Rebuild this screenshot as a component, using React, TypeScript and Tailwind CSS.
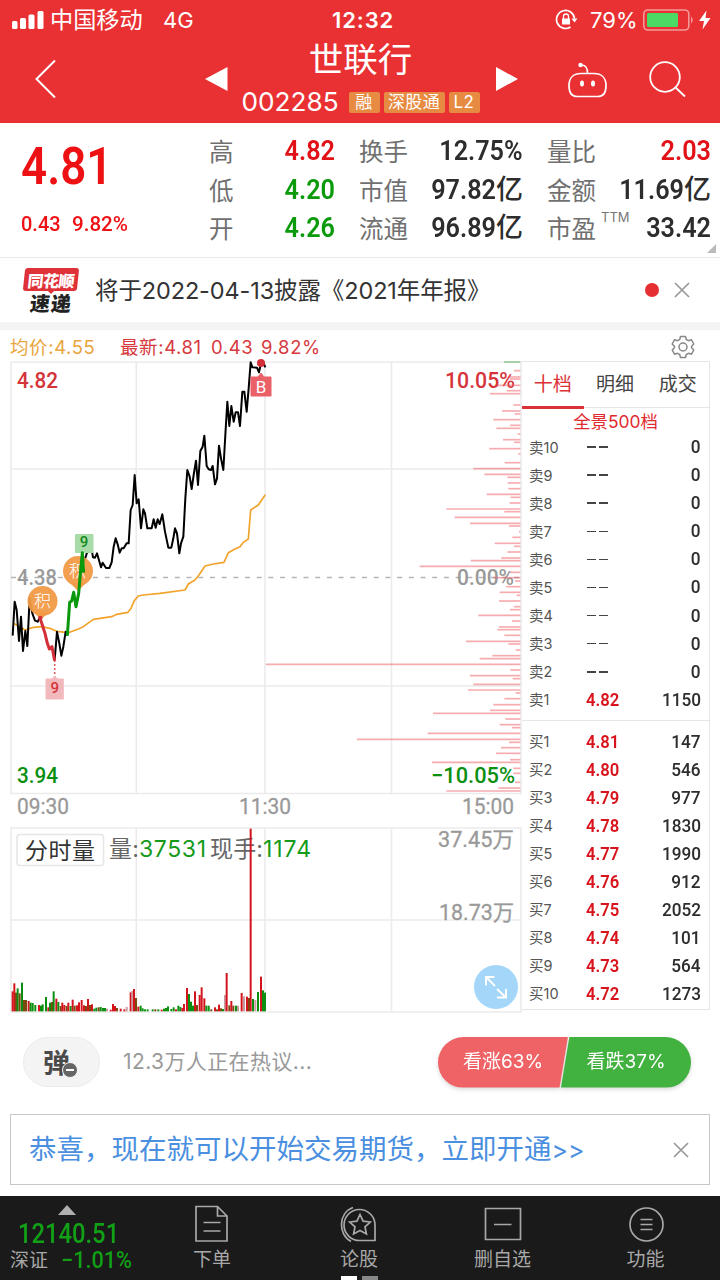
import React from "react";

const din = "inline-block whitespace-nowrap font-['Roboto','Noto_Sans_CJK_SC',sans-serif]";

type Metric = { label: string; sup?: string; value: string; unit?: string; color: string };

const metricColumns: { width: string; items: Metric[] }[] = [
  {
    width: "w-[126px]",
    items: [
      { label: "高", value: "4.82", color: "text-[#e01218]" },
      { label: "低", value: "4.20", color: "text-[#0a9a0c]" },
      { label: "开", value: "4.26", color: "text-[#0a9a0c]" },
    ],
  },
  {
    width: "w-[164px]",
    items: [
      { label: "换手", value: "12.75%", color: "text-[#2d2d2d]" },
      { label: "市值", value: "97.82", unit: "亿", color: "text-[#2d2d2d]" },
      { label: "流通", value: "96.89", unit: "亿", color: "text-[#2d2d2d]" },
    ],
  },
  {
    width: "w-[164px]",
    items: [
      { label: "量比", value: "2.03", color: "text-[#e01218]" },
      { label: "金额", value: "11.69", unit: "亿", color: "text-[#2d2d2d]" },
      { label: "市盈", sup: "TTM", value: "33.42", color: "text-[#2d2d2d]" },
    ],
  },
];

const asks = [
  ["卖10", "--", "0"],
  ["卖9", "--", "0"],
  ["卖8", "--", "0"],
  ["卖7", "--", "0"],
  ["卖6", "--", "0"],
  ["卖5", "--", "0"],
  ["卖4", "--", "0"],
  ["卖3", "--", "0"],
  ["卖2", "--", "0"],
  ["卖1", "4.82", "1150"],
];

const bids = [
  ["买1", "4.81", "147"],
  ["买2", "4.80", "546"],
  ["买3", "4.79", "977"],
  ["买4", "4.78", "1830"],
  ["买5", "4.77", "1990"],
  ["买6", "4.76", "912"],
  ["买7", "4.75", "2052"],
  ["买8", "4.74", "101"],
  ["买9", "4.73", "564"],
  ["买10", "4.72", "1273"],
];

// Turnover per price level: [left edge, y] in third-pixel units, measured from x=260.
const upperLevels = [
  [762, 137], [745, 156], [750, 162], [712, 181], [740, 197], [690, 206], [760, 240], [726, 258], [764, 267],
  [700, 284], [750, 301], [709, 310], [773, 327], [729, 344], [762, 352], [688, 371], [775, 387], [734, 413],
  [640, 431], [673, 448], [742, 457], [743, 474], [745, 491], [680, 508], [752, 517], [749, 534], [559, 552],
  [733, 560], [584, 577], [630, 595], [747, 603], [777, 620], [757, 637], [704, 655], [762, 664], [742, 681],
  [724, 699], [632, 707], [479, 724],
];
const lowerLevels = [
  [750, 7], [700, 23], [765, 33], [738, 50], [719, 67], [770, 76], [717, 93], [762, 110], [750, 119],
  [655, 136], [756, 153], [717, 171], [712, 179], [733, 196], [618, 214], [745, 222], [767, 240], [697, 257],
  [659, 266], [18, 283], [751, 300], [630, 317], [758, 326], [640, 343], [624, 360], [767, 369], [733, 386],
  [700, 404], [690, 421], [519, 430], [736, 447], [719, 464], [756, 473], [503, 490], [291, 508], [747, 517],
  [723, 533], [708, 550], [750, 569], [516, 577], [760, 595], [760, 610], [765, 637], [715, 654], [559, 663],
];

// Volume bars: [x, top, colour key] in third-pixel units; baseline is 574.
const volumes: [number, number, string][] = [
  [38, 514, "r"], [43, 490, "r"], [48, 518, "b"], [53, 505, "g"], [59, 520, "b"], [66, 488, "g"], [72, 540, "b"],
  [78, 540, "b"], [86, 543, "r"], [92, 548, "g"], [98, 549, "g"], [106, 555, "g"], [117, 555, "r"], [123, 557, "g"],
  [128, 553, "g"], [138, 531, "g"], [145, 562, "r"], [150, 548, "g"], [156, 546, "b"], [161, 514, "g"], [169, 536, "r"],
  [175, 546, "g"], [182, 558, "b"], [187, 548, "r"], [193, 555, "r"], [200, 558, "b"], [205, 548, "r"], [212, 558, "g"],
  [218, 539, "r"], [224, 557, "b"], [231, 556, "r"], [237, 547, "r"], [245, 540, "r"], [252, 556, "r"], [258, 558, "b"],
  [264, 537, "r"], [270, 555, "b"], [276, 553, "r"], [283, 566, "g"], [289, 563, "g"], [296, 562, "b"], [302, 561, "g"],
  [309, 564, "g"], [315, 564, "g"], [321, 566, "p"], [332, 569, "r"], [339, 552, "r"], [345, 558, "r"], [351, 564, "b"],
  [362, 566, "r"], [373, 568, "r"], [380, 561, "p"], [392, 517, "r"], [397, 513, "p"], [402, 507, "r"], [408, 534, "b"],
  [415, 560, "r"], [422, 557, "g"], [428, 565, "g"], [435, 568, "g"], [443, 568, "g"], [458, 568, "g"], [466, 568, "b"],
  [475, 568, "g"], [485, 569, "r"], [492, 566, "g"], [498, 564, "g"], [504, 559, "g"], [514, 567, "g"], [521, 562, "g"],
  [528, 568, "r"], [535, 557, "g"], [541, 561, "g"], [547, 564, "r"], [552, 552, "r"], [561, 504, "r"], [567, 522, "g"],
  [573, 545, "g"], [579, 557, "g"], [585, 514, "r"], [591, 555, "b"], [599, 525, "r"], [605, 502, "r"], [613, 535, "r"],
  [619, 557, "g"], [626, 557, "g"], [634, 568, "b"], [645, 562, "r"], [651, 568, "b"], [657, 554, "r"], [663, 565, "b"],
  [669, 567, "g"], [675, 525, "p"], [680, 459, "r"], [688, 556, "b"], [694, 543, "r"], [700, 557, "b"], [708, 557, "g"],
  [714, 557, "p"], [725, 519, "r"], [732, 529, "p"], [741, 530, "r"], [747, 534, "b"], [752, 26, "r"], [759, 537, "g"],
  [766, 540, "p"], [774, 516, "g"], [783, 470, "r"], [789, 511, "g"], [795, 518, "g"],
];
const volumeColor: Record<string, string> = { r: "#d4141c", g: "#0c8f10", b: "#7b4a10", p: "#c99aa0" };

function StatusBar() {
  return (
    <div className="flex h-10 items-center font-['Inter','Noto_Sans_CJK_SC',sans-serif] text-white">
      <svg className="ml-[11px]" width="33" height="20" viewBox="0 0 33 20" fill="#fff">
        <rect x="1" y="11" width="5.5" height="8" rx="1.5" />
        <rect x="9" y="8" width="6" height="11" rx="1.5" />
        <rect x="17.5" y="4.500" width="6" height="14.500" rx="1.500" />
        <rect x="26.500" y="1" width="6" height="18" rx="1.500" />
      </svg>
      <span className="ml-[6px] w-[113px] whitespace-nowrap text-[23.2px] leading-10">中国移动</span>
      <span className="w-[169px] text-[22px] leading-10">4G</span>
      <span className="w-[223px] text-[22px] font-semibold leading-10 tracking-[0.9px]">12:32</span>
      <svg width="24" height="22" viewBox="0 0 24 22" fill="none" stroke="#fff" strokeWidth="1.700">
        <path d="M19.500 9.500A9 9 0 1 0 15.500 18" />
        <path d="M16.500 9.500h6l-3 4z" fill="#fff" stroke="none" />
        <rect x="7" y="9.500" width="8" height="6" fill="#fff" stroke="none" />
        <path d="M8.500 10V7.500a2.500 2.500 0 0 1 5 0V10" strokeWidth="1.300" />
      </svg>
      <span className="ml-[11px] w-[53px] text-[22px] leading-10">79%</span>
      <svg width="70" height="24" viewBox="643 8 70 24">
        <rect x="643.800" y="10" width="45" height="20" rx="4" fill="none" stroke="#f49a9b" strokeWidth="1.600" />
        <rect x="647" y="13" width="31" height="14" rx="1.500" fill="#4cd964" />
        <path d="M691 16.500q3.500 3.500 0 7z" fill="#f49a9b" />
        <path d="M706.500 10.500l-7.500 10.500h5l-1.500 8.500 8-11.500h-5z" fill="#fff" />
      </svg>
    </div>
  );
}

function TitleBar() {
  return (
    <div className="flex h-[78px] items-center font-['Inter','Noto_Sans_CJK_SC',sans-serif] text-white">
      <svg className="ml-[34px]" width="22" height="40" viewBox="0 0 22 40" fill="none" stroke="#fff" strokeWidth="2">
        <path d="M21 1.500L2.500 20 21 38.500" />
      </svg>
      <svg className="ml-[149px]" width="23" height="24" viewBox="0 0 23 24" fill="#fff">
        <path d="M0 12L22.500 0v24z" />
      </svg>
      <div className="flex h-[78px] w-[268px] flex-col items-center pr-[3px]">
        <h1 className="h-[38px] text-[34.5px] font-normal leading-[40px]">世联行</h1>
        <div className="mt-[12px] flex h-6 items-center">
          <span className="w-[98px] text-[26.2px] leading-6">002285</span>
          <div className="ml-[9px] mt-px flex gap-1 text-center text-[17px] leading-5 tracking-[0.4px]">
            <span className="h-[21px] w-[31px] rounded-[2px] bg-[#e88b42]">融</span>
            <span className="h-[21px] w-[61px] rounded-[2px] bg-[#e88b42]">深股通</span>
            <span className="h-[21px] w-[31px] rounded-[2px] bg-[#e88b42]">L2</span>
          </div>
        </div>
      </div>
      <svg width="22" height="24" viewBox="0 0 22 24" fill="#fff">
        <path d="M22 12L0 0v24z" />
      </svg>
      <svg className="ml-[48px]" width="42" height="40" viewBox="566 60 42 40" fill="none" stroke="#fff" strokeWidth="1.700">
        <path d="M569 86.500c0-8 5-12 12-12h13c7 0 12 4 12 12 0 7-3 11-8 11h-21c-5 0-8-4-8-11z" />
        <path d="M581 66c5 0 6.500 2.500 6.500 8.500" />
        <circle cx="580.500" cy="66" r="2.200" fill="#fff" stroke="none" />
        <ellipse cx="582" cy="84.500" rx="2" ry="3" fill="#fff" stroke="none" />
        <ellipse cx="593" cy="84.500" rx="2" ry="3" fill="#fff" stroke="none" />
      </svg>
      <svg className="ml-[41px]" width="38" height="38" viewBox="649 60 38 38" fill="none" stroke="#fff" strokeWidth="1.800">
        <circle cx="665" cy="77" r="14.800" />
        <path d="M675 87l10 9.500" />
      </svg>
    </div>
  );
}

function Summary() {
  return (
    <section className="flex h-[135px] border-b border-[#e9e9e9]">
      <div className="w-[209px] pl-[21px] font-medium text-[#ee1114]">
        <div className={`${din} h-[86px] origin-left scale-x-[0.88] text-[52px] font-semibold leading-[88px]`}>4.81</div>
        <div className="flex h-[31px] items-center gap-[9px]">
          <span className="w-[42px]">
            <span className={`${din} origin-left scale-x-[0.95] text-[21px] leading-[33px]`}>0.43</span>
          </span>
          <span className={`${din} origin-left scale-x-[0.98] text-[21px] leading-[33px]`}>9.82%</span>
        </div>
      </div>
      <div className="flex gap-6 pt-[9px]">
        {metricColumns.map((column, index) => (
          <div key={index} className={column.width}>
            {column.items.map((item) => (
              <div key={item.label} className="flex h-[38.5px] items-center justify-between">
                <span className="flex whitespace-nowrap font-['Noto_Sans_CJK_SC',sans-serif] text-[24.5px] leading-[38px] text-[#707070]">
                  {item.label}
                  {item.sup && (
                    <sup className="top-0 ml-[5px] w-0 font-['Inter',sans-serif] text-[13px] leading-[16px] text-[#777]">
                      {item.sup}
                    </sup>
                  )}
                </span>
                <span className={`flex justify-end font-semibold ${item.color}`}>
                  <span className={`${din} origin-right scale-x-[0.9] text-[28px] leading-[38px]`}>{item.value}</span>
                  {item.unit && <span className={`${din} text-[27px] font-medium leading-[38px]`}>{item.unit}</span>}
                </span>
              </div>
            ))}
          </div>
        ))}
      </div>
      <svg className="mb-1 ml-[-4px] self-end" width="9" height="9" viewBox="0 0 9 9">
        <path d="M9 0v9H0z" fill="#bbb" />
      </svg>
    </section>
  );
}

function CloseIcon() {
  return (
    <svg width="16" height="16" viewBox="0 0 16 16" stroke="#999" strokeWidth="1.700" fill="none">
      <path d="M1 1l14 14M15 1L1 15" />
    </svg>
  );
}

function News() {
  return (
    <section className="flex h-[64px] items-center font-['Inter','Noto_Sans_CJK_SC',sans-serif]">
      <div className="ml-[22px] flex w-[57px] flex-col items-center">
        <div className="flex h-[23px] w-[54px] -skew-x-6 items-center justify-center rounded-[3px] bg-[#df3238] font-['Noto_Sans_CJK_SC',sans-serif] text-[16px] font-black tracking-[-0.5px] text-white">
          同花顺
        </div>
        <svg width="6" height="3" viewBox="0 0 6 3">
          <path d="M0 0h6L3 3z" fill="#df3238" />
        </svg>
        <div className="-mt-px -skew-x-6 font-['Noto_Sans_CJK_SC',sans-serif] text-[20px] font-black leading-[20px] tracking-[1px] text-[#222]">
          速递
        </div>
      </div>
      <p className="ml-[16px] mt-px w-[550px] whitespace-nowrap text-[23.500px] leading-[30px] tracking-[-0.12px] text-[#333]">
        将于2022-04-13披露《2021年年报》
      </p>
      <span className="size-[14px] rounded-full bg-[#e62e33]" />
      <span className="ml-[15px]">
        <CloseIcon />
      </span>
    </section>
  );
}

function Legend() {
  return (
    <div className="flex h-[31px] items-center whitespace-nowrap pl-[10px] pt-[3px] font-['Inter','Noto_Sans_CJK_SC',sans-serif] text-[18.500px] leading-[30px] tracking-[0.6px] text-[#d63a40]">
      <span className="w-[110px] text-[#e9a53c]">均价:4.55</span>
      <span className="w-[91px]">最新:4.81</span>
      <span className="w-[50px]">0.43</span>
      <span className="w-[410px]">9.82%</span>
      <svg width="24" height="24" viewBox="0 0 24 24" fill="none" stroke="#888" strokeWidth="1.500" strokeLinejoin="round">
        <path d="M9.500 1.500h5l.8 3 2.200 1.200 3-.9 2.300 4.200-2.200 2.200v1.600l2.200 2.200-2.300 4.200-3-.9-2.200 1.200-.8 3h-5l-.8-3-2.200-1.200-3 .9-2.300-4.200 2.200-2.200v-1.600L1.200 9l2.300-4.200 3 .9 2.200-1.200z" />
        <circle cx="12" cy="12" r="4" />
      </svg>
    </div>
  );
}

function Charts() {
  return (
    <svg
      className="shrink-0 font-['Roboto','Noto_Sans_CJK_SC',sans-serif]"
      width="522"
      height="656"
      viewBox="0 358 522 656"
      fill="none"
    >
      {/* grid */}
      <g stroke="#ebebeb" strokeWidth="1.600">
        <path d="M11 362H521V793.500H11zM136.300 362V793.500M265 362V793.500M391.500 362V793.500M11 469H521M11 686H521" />
        <path d="M11 828H521V1012H11zM136.300 828V1012M265 828V1012M391.500 828V1012M11 920H521" />
      </g>
      <path d="M11 577.500H521" stroke="#b5b5b5" strokeWidth="1.300" strokeDasharray="5 6.700" />

      <text x="457" y="585" fontSize="22" fontWeight="500" fill="#999" textLength="57" lengthAdjust="spacingAndGlyphs">0.00%</text>
      <text x="445" y="387.500" fontSize="22" fontWeight="500" fill="#d5343a" textLength="70" lengthAdjust="spacingAndGlyphs">10.05%</text>

      <g stroke="#ee5a60" strokeOpacity="0.5" strokeWidth="5">
        <g transform="translate(260 325) scale(.33333)">
          {upperLevels.map(([x, y]) => (
            <path key={`u${y}`} d={`M${x} ${y}H781`} />
          ))}
          <path d="M732 111H781" stroke="#35a845" />
        </g>
        <g transform="translate(260 570) scale(.33333)">
          {lowerLevels.map(([x, y]) => (
            <path key={`l${y}`} d={`M${x} ${y}H781`} />
          ))}
        </g>
      </g>

      {/* average price */}
      <path
        transform="translate(0 530) scale(.33333)"
        d="M40 280L60 290 75 300 100 292 125 290 150 295 170 304 205 308 235 297 250 290 280 268 300 265 335 260 350 253 384 247 393 235 403 212 415 198 430 195 480 190 555 180 565 162 585 150 597 135 615 108 640 102 672 97 685 68 705 57 720 50 730 37 745 27 752 -60 775 -75 785 -90 796 -106"
        stroke="#f2a32c"
        strokeWidth="5"
        strokeLinejoin="round"
      />
      {/* last price */}
      <g strokeLinejoin="round" strokeWidth="6">
        <path
          transform="translate(0 530) scale(.33333)"
          d="M38 317L44 215 50 240 57 333 63 260 69 363 76 303 82 348 89 205 97 250 105 272 113 275 120 262M164 390L171 305 178 340 184 377 190 350 197 305 202 317"
          stroke="#000"
        />
        <path
          transform="translate(0 325) scale(.33333)"
          d="M247 700L253 708 262 680 272 655 279 697 285 698 291 685 303 727 308 713 318 729 328 729 335 712 341 665 347 640 353 658 359 683 365 670 371 670 380 655 386 655 392 555 398 540 404 450 410 535 416 523 423 610 430 553 435 565 442 610 455 610 461 583 467 608 473 583 479 597 487 568 495 620 505 668 514 668 520 640 525 610 531 625 538 685 543 655 550 635 556 520 562 435 569 455 575 492 581 450 588 407 594 480 601 378 608 365 613 332 620 423 626 433 633 435 638 423 645 478 651 460 657 362 663 400 670 435 676 330 682 230 688 303 694 243 701 290 707 262 714 262 720 303 727 200 733 200 740 260 746 190 752 112 757 127 771 128 777 142 783 115 790 112 796 127"
          stroke="#000"
        />
      </g>

      {/* marker pins */}
      <g fill="#f29a47" fillOpacity="0.95">
        <circle cx="78" cy="571" r="15" />
        <path d="M70 583l8 8 8-8z" />
        <circle cx="42.500" cy="601" r="15" />
        <path d="M34 612l6.500 8 9-8z" />
      </g>
      <g fill="#fff" fontSize="17" fontWeight="300" textAnchor="middle">
        <text x="77.500" y="577">积</text>
        <text x="42.500" y="607">积</text>
      </g>
      <path d="M54.700 660V677" stroke="#e0555a" strokeWidth="1.500" strokeDasharray="2 2" />
      <path d="M46 679h6l2.700-3 2.600 3h6v20H46z" fill="#f2b9bd" stroke="#f2b9bd" strokeLinejoin="round" />
      <text x="54.700" y="693" fontSize="15" fontWeight="500" fill="#d5343a" textAnchor="middle">9</text>
      <rect x="75" y="534" width="18.500" height="19" rx="1" fill="#a8dba8" />
      <text x="84" y="547" fontSize="15" fontWeight="500" fill="#138a1a" textAnchor="middle">9</text>

      <g transform="translate(0 530) scale(.33333)" strokeLinejoin="round" strokeWidth="9">
        <path d="M120 265L127 285 135 310 142 340 148 357 156 350 164 392" stroke="#d42f38" />
        <path d="M202 317L209 217 215 213 221 187 228 230 236 190 242 120 247 68 251 128" stroke="#0a980c" />
      </g>
      <circle cx="40.300" cy="618" r="2.200" fill="#d42f38" />
      <circle cx="261" cy="363" r="4" fill="#d42f38" />
      <path d="M251 377h7l3-4 3 4h7v19h-20z" fill="#ea6168" stroke="#ea6168" strokeLinejoin="round" />
      <text x="261" y="392.500" fontSize="17" fill="#fff" textAnchor="middle">B</text>

      <g fontSize="22" fontWeight="500">
        <text x="17" y="387.500" fill="#d5343a" textLength="41" lengthAdjust="spacingAndGlyphs">4.82</text>
        <text x="17" y="585" fill="#999" textLength="40" lengthAdjust="spacingAndGlyphs">4.38</text>
        <text x="17" y="783" fill="#0b8f10" textLength="41" lengthAdjust="spacingAndGlyphs">3.94</text>
        <text x="431" y="783" fill="#0b8f10" textLength="84" lengthAdjust="spacingAndGlyphs">−10.05%</text>
      </g>
      <g fontSize="22" fill="#999" stroke="#999" strokeWidth="0.3">
        <text x="17" y="813.500" textLength="52" lengthAdjust="spacingAndGlyphs">09:30</text>
        <text x="239" y="813.500" textLength="52" lengthAdjust="spacingAndGlyphs">11:30</text>
        <text x="462" y="813.500" textLength="52" lengthAdjust="spacingAndGlyphs">15:00</text>
        <text x="438" y="846.500" textLength="76" lengthAdjust="spacingAndGlyphs">37.45万</text>
        <text x="439" y="920" textLength="75" lengthAdjust="spacingAndGlyphs">18.73万</text>
      </g>

      {/* volume */}
      <rect x="17" y="834.500" width="86.500" height="31" rx="3" fill="#fff" stroke="#e6e6e6" strokeWidth="1.600" />
      <g fontSize="23" fontFamily="Inter, Noto Sans CJK SC, sans-serif">
        <text x="25" y="859" fill="#333" textLength="70">分时量</text>
        <text x="109" y="857" fill="#666" textLength="30">量:</text>
        <text x="139" y="857" fill="#159a1a" textLength="67">37531</text>
        <text x="210" y="857" fill="#666" textLength="53">现手:</text>
        <text x="263" y="857" fill="#159a1a" textLength="48">1174</text>
      </g>
      <g transform="translate(0 820) scale(.33333)" strokeWidth="6">
        {volumes.map(([x, top, key]) => (
          <path key={x} d={`M${x} 574V${top}`} stroke={volumeColor[key]} />
        ))}
      </g>

      <circle cx="496" cy="987" r="22" fill="#a3d6f8" />
      <path d="M495 986l-9-9m0 8.500v-8.500h8.500M497 989l9 8.500m0-8.500v8.500h-9" stroke="#fff" strokeWidth="1.900" />
    </svg>
  );
}

function DepthRow({ row }: { row: string[] }) {
  const empty = row[1] === "--";
  return (
    <div className="flex h-[28px] items-center font-medium">
      <span className="w-[57px] font-['Inter','Noto_Sans_CJK_SC',sans-serif] text-[14.500px] font-normal leading-[29px] text-[#555]">{row[0]}</span>
      <span className="w-[46px]">
        {empty ? (
          <span className="flex gap-[3px] pl-px">
            <i className="h-[1.500px] w-[9px] bg-[#444]" />
            <i className="h-[1.500px] w-[9px] bg-[#444]" />
          </span>
        ) : (
          <span className={`${din} origin-left scale-x-[0.9] text-[18.500px] font-semibold leading-7 text-[#d8131b]`}>{row[1]}</span>
        )}
      </span>
      <span className="flex w-[69px] justify-end">
        <span className={`${din} origin-right scale-x-[0.93] text-[18.500px] leading-7 text-[#2d2d2d]`}>{row[2]}</span>
      </span>
    </div>
  );
}

function OrderBook() {
  return (
    <aside className="mt-[3px] h-[649px] w-[188px] border border-l-0 border-[#e6e6e6] font-['Inter','Noto_Sans_CJK_SC',sans-serif]">
      <div className="flex h-[46px] border-b border-[#e6e6e6] text-[19px] leading-[46px] text-[#444]">
        <span className="h-[47px] w-[62px] border-b-[3px] border-[#dc3237] text-center text-[#dc3237]">十档</span>
        <span className="w-[63px] text-center">明细</span>
        <span className="w-[63px] text-center">成交</span>
      </div>
      <div className="h-[25px] text-center text-[17.400px] leading-[28px] text-[#e02a2f]">全景500档</div>
      <div className="flex flex-col gap-[0.1px] border-b-[1.500px] border-[#e6e6e6] pb-[6px] pl-[7px]">
        {asks.map((row) => (
          <DepthRow key={row[0]} row={row} />
        ))}
      </div>
      <div className="pl-[7px] pt-[7px]">
        {bids.map((row) => (
          <DepthRow key={row[0]} row={row} />
        ))}
      </div>
    </aside>
  );
}

function Discussion() {
  return (
    <section className="flex h-24 items-center font-['Inter','Noto_Sans_CJK_SC',sans-serif]">
      <div className="ml-[23px] flex h-[50px] w-[77px] items-center rounded-full border border-[#ececec] bg-[#f4f4f4] pl-[19px]">
        <span className="font-['Noto_Sans_CJK_SC',sans-serif] text-[27px] font-bold leading-[44px] text-[#4a4a4a]">弹</span>
        <svg className="-ml-2 mt-[16px]" width="16" height="16" viewBox="0 0 16 16">
          <circle cx="8" cy="8" r="7.500" fill="#666" stroke="#f4f4f4" />
          <path d="M4 8h8" stroke="#fff" strokeWidth="2" />
        </svg>
      </div>
      <span className="ml-[23px] w-[315px] whitespace-nowrap text-[21px] leading-8 tracking-[0.4px] text-[#999]">12.3万人正在热议...</span>
      <div className="flex text-[19px] leading-[50px] text-white drop-shadow-[0_2px_2px_rgba(0,0,0,0.15)]">
        <div className="h-[51px] w-[130px] rounded-l-full bg-[#ef6266] text-center [clip-path:polygon(0_0,100%_0,93.500%_100%,0_100%)]">看涨63%</div>
        <div className="-ml-[7px] h-[51px] w-[130px] rounded-r-full bg-[#41b13f] text-center [clip-path:polygon(6.500%_0,100%_0,100%_100%,0_100%)]">看跌37%</div>
      </div>
    </section>
  );
}

function Promo() {
  return (
    <section className="mx-[10px] mt-[4px] flex h-[71px] items-center border border-[#c8c8c8] pl-[18px] font-['Inter','Noto_Sans_CJK_SC',sans-serif] text-[27.500px] leading-[69px] text-[#4a8fe0]">
      <span className="w-[644px] whitespace-nowrap">
        恭喜，现在就可以开始交易期货，立即开通<span className="text-[25px]">&gt;&gt;</span>
      </span>
      <CloseIcon />
    </section>
  );
}

const tabs = [
  {
    label: "下单",
    width: "w-[144px]",
    icon: <path d="M4 2.500h21.500L35 12v25H4zM25.500 2.500V12H35M11.500 18.500h17M11.500 27h17" />,
  },
  {
    label: "论股",
    width: "w-[150px]",
    icon: (
      <path d="M36 36.500H21A15.500 15.500 0 1 1 36 21zM14 3.500C-1 9-1 31 12 37.500M21 10.500l3.100 6.600 7.200.9-5.300 4.900 1.400 7.100-6.400-3.500-6.400 3.500 1.400-7.100-5.300-4.900 7.200-.9z" />
    ),
  },
  { label: "删自选", width: "w-[137px]", icon: <path d="M3.500 4.500h35v31h-35zM12 20.500h17.500" /> },
  {
    label: "功能",
    width: "w-[149px]",
    icon: (
      <>
        <circle cx="21.500" cy="20.500" r="16.500" />
        <path d="M15.500 15.500h12M15.500 20.500h12M15.500 25.500h12" />
      </>
    ),
  },
];

function BottomNav() {
  return (
    <nav className="mt-[11px] flex h-[84px] bg-[#1a1a1a] font-['Inter','Noto_Sans_CJK_SC',sans-serif]">
      <div className="w-[140px] font-medium">
        <svg className="ml-[58px] mt-[9px]" width="18" height="10" viewBox="0 0 18 10">
          <path d="M9 0l9 10H0z" fill="#b0b0b0" />
        </svg>
        <div className={`${din} ml-[18px] h-[35px] origin-left scale-x-[0.88] text-[27px] leading-[38px] text-[#12a016]`}>12140.51</div>
        <div className="-mt-[4px] flex h-[30px] items-center pl-[10px] text-[19px] font-normal leading-[30px] text-[#a8a8a8]">
          <span className="w-[51px]">深证</span>
          <span className={`${din} origin-left scale-x-[0.94] text-[23px] font-medium leading-[30px] text-[#12a016]`}>−1.01%</span>
        </div>
      </div>
      {tabs.map((tab) => (
        <div key={tab.label} className={`${tab.width} flex flex-col items-center pt-[8px] text-[19px] leading-[30px] text-[#a8a8a8]`}>
          <svg width="41" height="41" viewBox="0 0 41 41" fill="none" stroke="#a8a8a8" strokeWidth="1.700">
            {tab.icon}
          </svg>
          {tab.label}
          {tab.label === "论股" && (
            <span className="mt-px flex gap-[5px]">
              <i className="h-1 w-4 bg-white" />
              <i className="h-1 w-4 bg-[#888]" />
            </span>
          )}
        </div>
      ))}
    </nav>
  );
}

export default function App() {
  return (
    <main className="h-[1280px] w-[720px] overflow-hidden bg-white">
      <header className="h-[123px] bg-[#e93133]">
        <StatusBar />
        <TitleBar />
      </header>
      <Summary />
      <News />
      <div className="h-2 bg-[#f4f4f4]" />
      <Legend />
      <div className="-mt-[3px] flex">
        <Charts />
        <OrderBook />
      </div>
      <Discussion />
      <Promo />
      <BottomNav />
    </main>
  );
}
